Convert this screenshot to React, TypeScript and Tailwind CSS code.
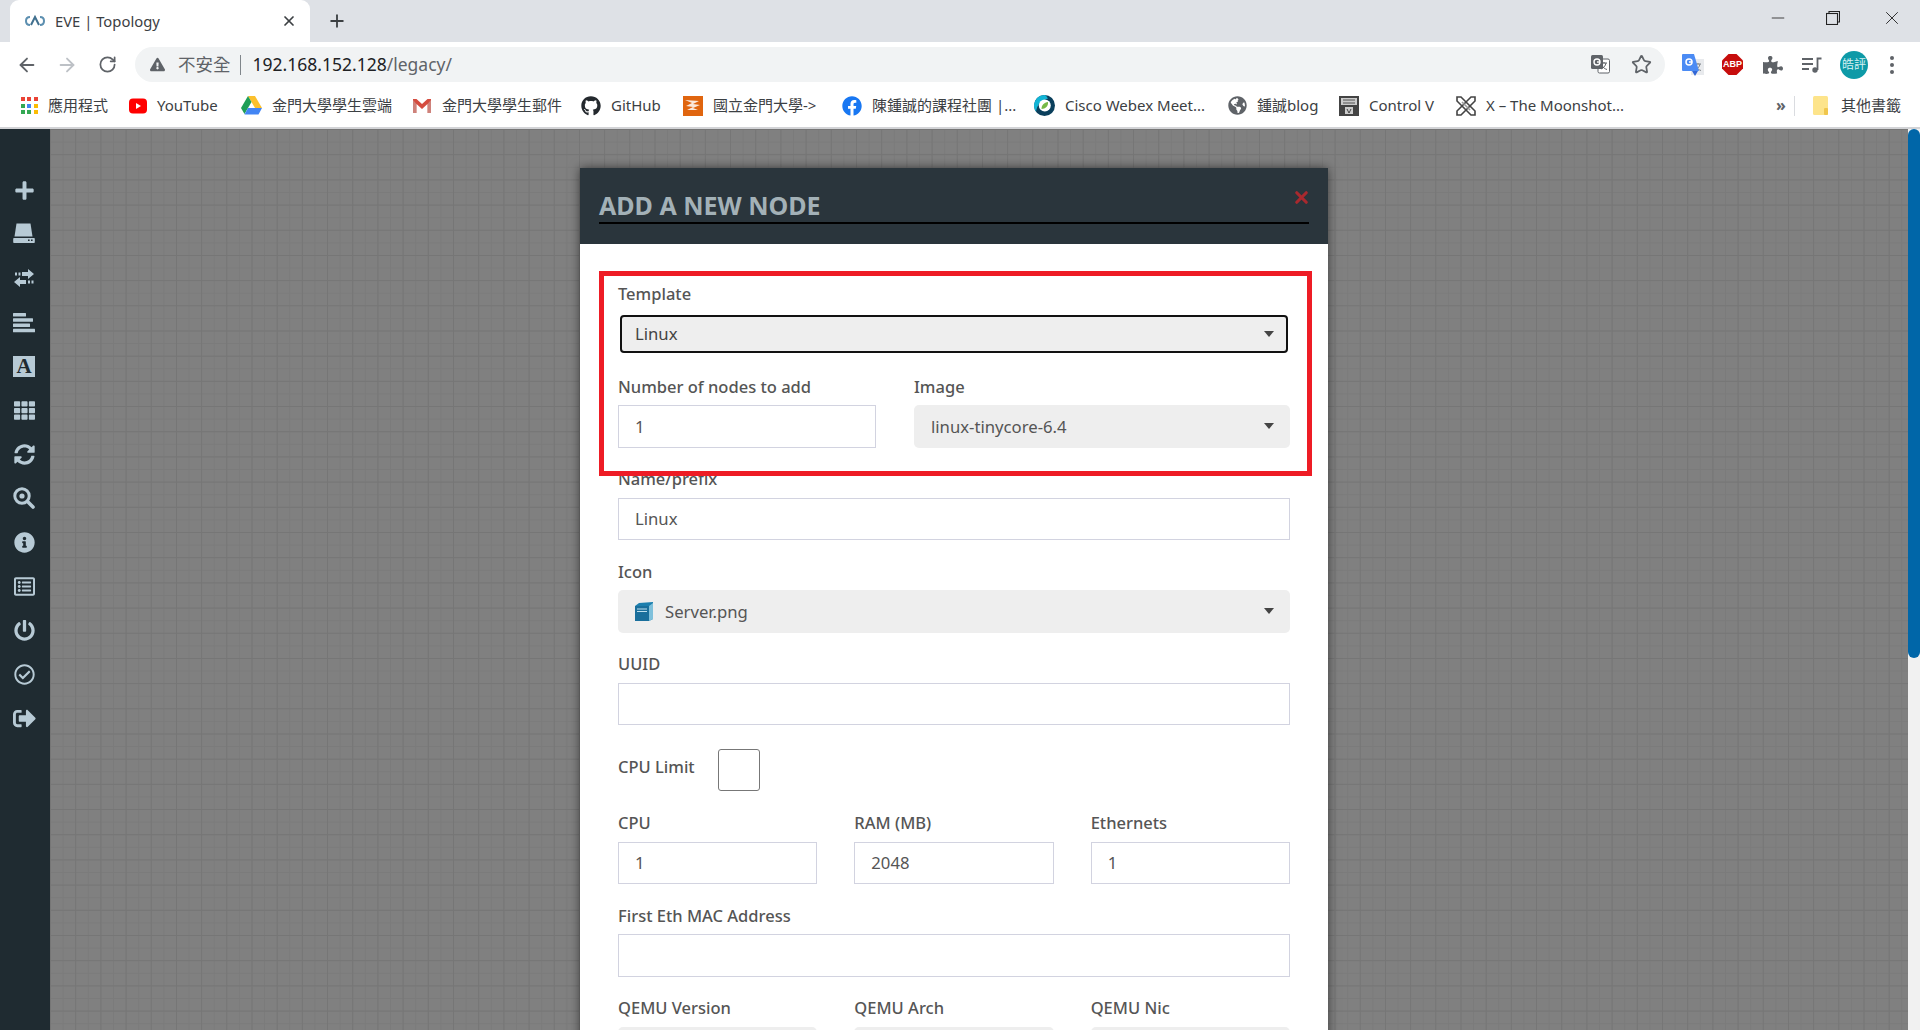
import React from "react";
import { ArrowLeft, ArrowRight, RotateCw, Star, X, Plus, Minus } from "lucide-react";
import {
  FaPlus, FaTh, FaSyncAlt, FaInfoCircle, FaRegListAlt, FaPowerOff, FaRegCheckCircle, FaSignOutAlt,
  FaGithub, FaFacebook, FaGlobeAmericas, FaPuzzlePiece, FaExclamationTriangle,
} from "react-icons/fa";

const chromeFont = "font-['Noto_Sans','Noto_Sans_CJK_TC',sans-serif]";
const formFont = "font-['Noto_Sans','Open_Sans',sans-serif]";

function Hdd() {
  return (
    <svg width="22" height="22" viewBox="0 0 22 22" fill="currentColor">
      <path d="M3.5 0.5h14l2 13H1.5z" />
      <path fillRule="evenodd" d="M1 15h20a.8.8 0 0 1 .8.8v3.4a.8.8 0 0 1-.8.8H1a.8.8 0 0 1-.8-.8v-3.4A.8.8 0 0 1 1 15zM15 16.5v1.6h1.6v-1.6zM18 16.5v1.6h1.6v-1.6z" />
    </svg>
  );
}
function Exchange() {
  return (
    <svg width="22" height="20" viewBox="0 0 22 20" fill="currentColor">
      <path d="M15 1l6 5-6 5V8H9V4h6zM2 4.500h2v3H2zM5.500 4.500h2v3h-2z" />
      <path d="M7 9l-6 5 6 5v-3h6v-4H7zM15 12.500h2v3h-2zM18.500 12.500h2v3h-2z" />
    </svg>
  );
}
function AlignBars() {
  return (
    <svg width="22" height="20" viewBox="0 0 22 20" fill="currentColor" className="mt-[2px]">
      <rect x="0" y="0" width="13" height="3.500" rx=".5" />
      <rect x="0" y="5.300" width="20" height="3.500" rx=".5" />
      <rect x="0" y="10.500" width="17" height="3.500" rx=".5" />
      <rect x="0" y="15.800" width="22" height="3.500" rx=".5" />
    </svg>
  );
}
function SearchDot() {
  return (
    <svg width="22" height="22" viewBox="0 0 22 22" fill="none" stroke="currentColor">
      <circle cx="9" cy="9" r="7.200" strokeWidth="3" />
      <circle cx="9" cy="9" r="2.600" fill="currentColor" stroke="none" />
      <path d="M14.500 14.500L20 20" strokeWidth="3.600" strokeLinecap="round" />
    </svg>
  );
}

const sideIcons = [
  <FaPlus size={21} />,
  <Hdd />,
  <Exchange />,
  <AlignBars />,
  <span className="flex h-[21px] w-[22px] items-center justify-center bg-[#b7cad5] font-['Liberation_Serif',serif] text-[21px] font-bold leading-none text-[#1f2b31]">A</span>,
  <FaTh size={21} />,
  <FaSyncAlt size={21} />,
  <SearchDot />,
  <FaInfoCircle size={21} />,
  <FaRegListAlt size={21} />,
  <FaPowerOff size={21} />,
  <FaRegCheckCircle size={21} />,
  <FaSignOutAlt size={23} />,
];

function Favicon() {
  return (
    <svg width="20" height="14" viewBox="0 0 20 14" fill="none" stroke="#5c8fb0" strokeWidth="2">
      <path d="M5 3C2 3 1 5 1 7s1 4 4 4" />
      <path d="M15 3c3 0 4 2 4 4s-1 4-4 4" />
      <path d="M6 11l4-8 4 8" stroke="#41708f" />
    </svg>
  );
}

function AppsIcon() {
  const c = ["#ea4335", "#ea4335", "#ea4335", "#34a853", "#4285f4", "#fbbc04", "#34a853", "#34a853", "#fbbc04"];
  return (
    <span className="grid grid-cols-3 gap-[2.500px]">
      {c.map((x, i) => (
        <svg key={i} width="4" height="4" viewBox="0 0 4 4"><rect width="4" height="4" fill={x} /></svg>
      ))}
    </span>
  );
}
function YouTubeIcon() {
  return (
    <svg width="18" height="18" viewBox="0 0 18 18">
      <rect y="1.500" width="18" height="15" rx="4" fill="#f00" />
      <path d="M7 6l5 3-5 3z" fill="#fff" />
    </svg>
  );
}
function DriveIcon() {
  return (
    <svg width="21" height="19" viewBox="0 0 21 19">
      <path d="M7 0h7l7 12h-7z" fill="#fbc02d" />
      <path d="M7 0l3.500 6L3.500 18 0 12z" fill="#1e9e57" />
      <path d="M7 12h14l-3.500 6.500h-14z" fill="#4285f4" />
    </svg>
  );
}
function GmailIcon() {
  return (
    <svg width="18" height="15" viewBox="0 0 18 15">
      <path d="M0 1h3.500L9 6l5.500-5H18v14h-3.500V6L9 11 3.500 6v9H0z" fill="#d54c3f" />
      <path d="M3.500 6v9H0V2z" fill="#c5c5c5" opacity=".45" />
      <path d="M14.500 6v9H18V2z" fill="#c5c5c5" opacity=".45" />
    </svg>
  );
}
function OrangeIcon() {
  return (
    <svg width="20" height="20" viewBox="0 0 20 20">
      <rect width="20" height="20" fill="#e0650f" />
      <path d="M2 4l14 1-6 3 7 1-7 3 5 2H4l6-3-7-1 6-3z" fill="#fff" opacity=".85" />
    </svg>
  );
}
function WebexIcon() {
  return (
    <svg width="21" height="21" viewBox="0 0 21 21" fill="none">
      <circle cx="10.500" cy="10.500" r="10.500" fill="#0a3f5c" />
      <path d="M10.500 0A10.500 10.500 0 0 0 2 16.500C3 10 7 5 14 3.500 12.500 1 11.500 0 10.500 0z" fill="#12b5d6" />
      <circle cx="10.800" cy="10.500" r="6" fill="#fff" />
      <path d="M7.500 14c0-4 2.500-6.500 6.500-7 .5 4-2.500 7-6.500 7z" fill="#76b947" />
    </svg>
  );
}
function CtrlVIcon() {
  return (
    <svg width="20" height="20" viewBox="0 0 20 20">
      <rect width="20" height="20" fill="#444" />
      <rect x="2" y="2" width="16" height="7" fill="#ccc" />
      <rect x="6" y="11" width="8" height="7" fill="#ccc" />
      <path d="M4 4h12M4 7h12" stroke="#555" strokeWidth="1" />
      <path d="M8 13l2 4 2-4" stroke="#444" fill="none" />
    </svg>
  );
}
function XLogo() {
  return (
    <svg width="20" height="20" viewBox="0 0 20 20" fill="none" stroke="#444" strokeWidth="1.600">
      <path d="M1 1h4l14 14v4h-4L1 5z" />
      <path d="M19 1h-4L1 15v4h4L19 5z" />
      <path d="M6 6l8 8" stroke="#999" />
    </svg>
  );
}
function FolderIcon() {
  return (
    <svg width="15" height="19" viewBox="0 0 15 19">
      <rect width="15" height="19" rx="1.500" fill="#fde48b" />
      <rect x="11" y="12" width="4" height="7" rx="1" fill="#f0c64c" />
    </svg>
  );
}
function TranslateGray() {
  return (
    <svg width="19" height="19" viewBox="0 0 19 19">
      <rect x="7" y="4" width="11.500" height="14" rx="1.500" fill="#fff" stroke="#5f6368" />
      <path d="M10 8h6M13 7v1.500M15 8c-.5 3-2.500 5-5 6M11 10.500c1 2 3 3.500 5 4" stroke="#5f6368" fill="none" />
      <rect x="0" y="0" width="12" height="14" rx="1.500" fill="#5f6368" />
      <circle cx="6" cy="7" r="3" fill="none" stroke="#fff" strokeWidth="1.400" />
      <path d="M6 7h3" stroke="#fff" strokeWidth="1.400" />
    </svg>
  );
}
function TranslateBlue() {
  return (
    <svg width="22" height="22" viewBox="0 0 22 22">
      <rect x="9" y="5" width="13" height="16" fill="#e8eaed" />
      <path d="M13 10h6M16 9v1.500M18 10c-.5 3-2.500 5-5 6M14 12.500c1 2 3 3.500 5 4" stroke="#80868b" fill="none" />
      <path d="M1 0h11l5 17H1a1 1 0 0 1-1-1V1a1 1 0 0 1 1-1z" fill="#4b8bf4" />
      <path d="M10 17h6l-3 5z" fill="#3367d6" />
      <circle cx="7" cy="8" r="3" fill="none" stroke="#fff" strokeWidth="1.500" />
      <path d="M7 8h3.200" stroke="#fff" strokeWidth="1.500" />
    </svg>
  );
}
function Abp() {
  return (
    <svg width="21" height="21" viewBox="0 0 21 21">
      <path d="M6.500 0h8L21 6.500v8L14.500 21h-8L0 14.500v-8z" fill="#c70d0c" />
    </svg>
  );
}
function MediaIcon() {
  return (
    <svg width="20" height="16" viewBox="0 0 20 16" fill="none" stroke="#5f6368" strokeWidth="1.800">
      <path d="M0 2h11M0 7h11M0 12h7" />
      <path d="M15.500 13V1.500h4" />
      <circle cx="13" cy="13" r="2.700" fill="#5f6368" stroke="none" />
    </svg>
  );
}

function Bookmark({ w, slot, icon, label }: { w: string; slot: string; icon: React.ReactNode; label: string }) {
  return (
    <div className={`flex shrink-0 items-center gap-[10px] ${w}`}>
      <span className={`flex shrink-0 items-center justify-center ${slot}`}>{icon}</span>
      <span className="whitespace-nowrap">{label}</span>
    </div>
  );
}

function Label({ children }: { children: React.ReactNode }) {
  return <label className="mb-[6.500px] block h-6 text-[16.500px] font-medium leading-6 text-[#555]">{children}</label>;
}
function Input({ value = "" }: { value?: string }) {
  return (
    <div className="flex h-[42.500px] items-center border border-[#d2d3e0] bg-white pl-4 text-[16.700px] text-[#555]">{value}</div>
  );
}
function Caret({ right = "right-[16px]" }: { right?: string }) {
  return (
    <svg className={`absolute top-1/2 -translate-y-1/2 ${right}`} width="10" height="6" viewBox="0 0 10 6">
      <path d="M0 0h10L5 6z" fill="#444" />
    </svg>
  );
}
function Select({ children }: { children?: React.ReactNode }) {
  return (
    <div className="relative flex h-[42.500px] items-center rounded-[5px] bg-[#eee] pl-[17px] text-[16.700px] text-[#555]">
      {children}
      <Caret />
    </div>
  );
}
function Group({ label, children }: { label: string; children: React.ReactNode }) {
  return (
    <div className="mb-[19.500px]">
      <Label>{label}</Label>
      {children}
    </div>
  );
}

export default function App() {
  return (
    <div className="flex h-[1030px] w-[1920px] flex-col overflow-hidden bg-white">
      {/* tab strip */}
      <div className={`flex h-[42px] shrink-0 bg-[#dee1e6] ${chromeFont}`}>
        <div className="ml-[10px] flex h-[42px] w-[300px] items-center rounded-t-[9px] bg-white pl-[15px] pr-[13px] text-[14.800px] text-[#3c4043]">
          <Favicon />
          <span className="ml-[10px] flex-1 whitespace-nowrap">EVE | Topology</span>
          <X size={16} strokeWidth={2.600} className="text-[#3c4043]" />
        </div>
        <div className="ml-[17px] flex items-center text-[#3c4043]">
          <Plus size={20} strokeWidth={2.200} />
        </div>
        <div className="flex-1" />
        <div className="flex h-[36px] items-center text-[#222]">
          <Minus size={20} strokeWidth={1} className="mr-[38px]" />
          <svg width="14" height="14" viewBox="0 0 14 14" fill="none" stroke="#222" strokeWidth="1.100" className="mr-[41px]">
            <rect x=".5" y="2.500" width="11" height="11" />
            <path d="M3 2.500V.5h10.500V11h-2" />
          </svg>
          <X size={22} strokeWidth={1} className="mr-[17px]" />
        </div>
      </div>

      {/* toolbar */}
      <div className={`flex h-[48px] shrink-0 items-center bg-white pb-[3px] pl-[16px] ${chromeFont}`}>
        <ArrowLeft size={22} strokeWidth={2} className="text-[#5f6368]" />
        <ArrowRight size={22} strokeWidth={2} className="ml-[18px] text-[#bdc1c6]" />
        <RotateCw size={19} strokeWidth={2.200} className="ml-[20px] text-[#5f6368]" />
        <div className="ml-[18px] flex h-[35px] w-[1530px] items-center rounded-full bg-[#f1f3f4] pl-[15px] text-[#5f6368]">
          <FaExclamationTriangle size={15} className="text-[#5f6368]" />
          <span className="ml-[13px] text-[17.500px]">不安全</span>
          <span className="ml-[9px] h-[20px] w-px bg-[#80868b]" />
          <span className="ml-[12px] text-[17.500px] text-[#202124]">192.168.152.128<span className="text-[#5f6368]">/legacy/</span></span>
          <span className="flex-1" />
          <TranslateGray />
          <Star size={21} strokeWidth={2} className="ml-[21px] mr-[13px] text-[#5f6368]" />
        </div>
        <span className="ml-[17px]"><TranslateBlue /></span>
        <span className="relative ml-[18px] flex items-center justify-center">
          <Abp />
          <span className="absolute font-['Liberation_Sans',sans-serif] text-[9px] font-bold text-white">ABP</span>
        </span>
        <FaPuzzlePiece size={20} className="ml-[20px] text-[#5f6368]" />
        <span className="ml-[19px]"><MediaIcon /></span>
        <span className="ml-[18px] flex h-[28px] w-[28px] items-center justify-center rounded-full bg-[#0e9aa7] text-[12px] leading-none text-[#d5f1f3]">皓評</span>
        <span className="ml-[22px] flex flex-col gap-[3px]">
          <span className="h-[4px] w-[4px] rounded-full bg-[#5f6368]" />
          <span className="h-[4px] w-[4px] rounded-full bg-[#5f6368]" />
          <span className="h-[4px] w-[4px] rounded-full bg-[#5f6368]" />
        </span>
      </div>

      {/* bookmarks */}
      <div className={`flex h-[37px] shrink-0 items-center bg-white pb-[6px] pl-[20px] text-[15px] text-[#3c4043] ${chromeFont}`}>
        <Bookmark w="w-[109px]" slot="w-[18px]" icon={<AppsIcon />} label="應用程式" />
        <Bookmark w="w-[112px]" slot="w-[18px]" icon={<YouTubeIcon />} label="YouTube" />
        <Bookmark w="w-[171px]" slot="w-[21px]" icon={<DriveIcon />} label="金門大學學生雲端" />
        <Bookmark w="w-[169px]" slot="w-[20px]" icon={<GmailIcon />} label="金門大學學生郵件" />
        <Bookmark w="w-[102px]" slot="w-[20px]" icon={<FaGithub size={20} className="text-[#24292e]" />} label="GitHub" />
        <Bookmark w="w-[158px]" slot="w-[20px]" icon={<OrangeIcon />} label="國立金門大學->" />
        <Bookmark w="w-[193px]" slot="w-[21px]" icon={<FaFacebook size={20} className="text-[#1877f2]" />} label="陳鍾誠的課程社團 |..." />
        <Bookmark w="w-[193px]" slot="w-[21px]" icon={<WebexIcon />} label="Cisco Webex Meet..." />
        <Bookmark w="w-[112px]" slot="w-[20px]" icon={<FaGlobeAmericas size={19} className="text-[#5f6368]" />} label="鍾誠blog" />
        <Bookmark w="w-[117px]" slot="w-[20px]" icon={<CtrlVIcon />} label="Control V" />
        <Bookmark w="w-[320px]" slot="w-[20px]" icon={<XLogo />} label="X – The Moonshot..." />
        <span className="-mt-[2px] w-[18px] text-[16px] font-bold text-[#5f6368]">»</span>
        <span className="h-[20px] w-px bg-[#dadce0]" />
        <span className="ml-[18px]"><FolderIcon /></span>
        <span className="ml-[13px] whitespace-nowrap">其他書籤</span>
      </div>
      <div className="h-[2px] shrink-0 bg-[#d2d3d6]" />

      {/* page */}
      <div className="flex min-h-0 flex-1">
        <div className="flex w-[50px] shrink-0 flex-col items-center bg-[#1f2b31] pt-[39px] text-[#b7cad5]">
          {sideIcons.map((ic, i) => (
            <div key={i} className="flex h-[44px] w-full shrink-0 items-center justify-center pr-[2px]">{ic}</div>
          ))}
        </div>

        <div className="min-w-0 flex-1 overflow-hidden bg-[#808080] bg-[image:linear-gradient(to_right,#767676_1px,transparent_1px),linear-gradient(to_bottom,#767676_1px,transparent_1px),linear-gradient(to_right,#7b7b7b_1px,transparent_1px),linear-gradient(to_bottom,#7b7b7b_1px,transparent_1px)] bg-[size:25.200px_25.200px,25.200px_25.200px,12.600px_12.600px,12.600px_12.600px] pl-[530px] pt-[39px]">
          <div className={`relative w-[748px] bg-white shadow-[0_0_10px_rgba(0,0,0,0.55)] ${formFont}`}>
            <div className="flex h-[76px] flex-col bg-[#2a353c] px-[19px] pt-[20px]">
              <div className="flex h-[36px] items-start justify-between border-b-2 border-black">
                <span className="-mt-[1px] text-[25px] font-bold leading-[36px] text-[#a3b1b7]">ADD A NEW NODE</span>
                <X size={19} strokeWidth={4} className="-mr-[2px] text-[#a8292e]" />
              </div>
            </div>

            <div className="px-[38px] pt-[38px]">
              <Group label="Template">
                <div className="rounded-[6px] bg-white p-[2px]">
                  <div className="relative flex h-[38.500px] items-center rounded-[4px] border-2 border-[#111] bg-[#eee] pl-[13px] text-[16.700px] text-[#444]">
                    Linux
                    <Caret right="right-[12px]" />
                  </div>
                </div>
              </Group>

              <div className="grid grid-cols-[258px_1fr] gap-x-[38px]">
                <Group label="Number of nodes to add"><Input value="1" /></Group>
                <Group label="Image"><Select>linux-tinycore-6.4</Select></Group>
              </div>

              <Group label="Name/prefix"><Input value="Linux" /></Group>

              <Group label="Icon">
                <Select>
                  <svg width="18" height="19" viewBox="0 0 18 19" className="mr-[12px]">
                    <path d="M0 4l4-3 14-1v17l-4 2H0z" fill="#1d7fae" />
                    <path d="M0 4h14v15H0z" fill="#1a6f9c" />
                    <path d="M14 4l4-3v16l-4 2z" fill="#7fc0db" />
                    <path d="M2 7h10M2 9.500h10" stroke="#bfe0ee" strokeWidth="1" />
                  </svg>
                  Server.png
                </Select>
              </Group>

              <Group label="UUID"><Input /></Group>

              <div className="mb-[20px] mt-[24px] flex h-[42px] items-start">
                <span className="mt-[6px] h-6 w-[100px] text-[16.500px] font-medium leading-6 text-[#555]">CPU Limit</span>
                <span className="h-[42px] w-[42px] rounded-[3px] border border-[#777] bg-white" />
              </div>

              <div className="grid grid-cols-3 gap-x-[37px]">
                <Group label="CPU"><Input value="1" /></Group>
                <Group label="RAM (MB)"><Input value="2048" /></Group>
                <Group label="Ethernets"><Input value="1" /></Group>
              </div>

              <Group label="First Eth MAC Address"><Input /></Group>

              <div className="grid grid-cols-3 gap-x-[37px]">
                <Group label="QEMU Version"><Select /></Group>
                <Group label="QEMU Arch"><Select /></Group>
                <Group label="QEMU Nic"><Select /></Group>
              </div>
            </div>

            <div className="pointer-events-none absolute left-[19px] top-[103px] h-[205px] w-[713px] border-[5px] border-[#ee1c25]" />
          </div>
        </div>

        <div className="w-[12px] shrink-0 bg-[#f1f1f1]">
          <div className="h-[529px] rounded-b-[6px] rounded-t-[6px] bg-[#0066a8]" />
        </div>
      </div>
    </div>
  );
}
